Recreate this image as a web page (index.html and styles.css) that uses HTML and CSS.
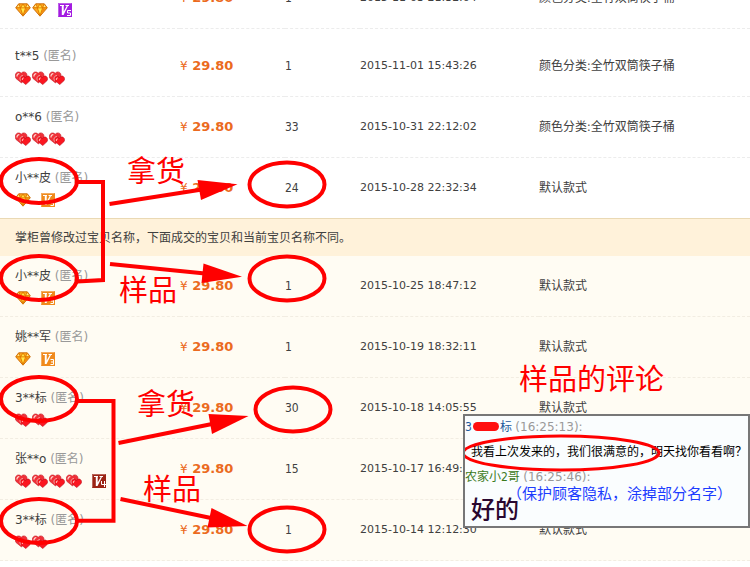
FILE: index.html
```html
<!doctype html>
<html lang="zh-CN">
<head>
    <meta charset="UTF-8">
    <meta name="viewport" content="width=device-width, initial-scale=1.0">
    <title>成交记录</title>
    <link rel="stylesheet" href="styles.css">
</head>
<body>
<!-- icons used in the buyer column -->
<svg class="sprite" aria-hidden="true">
    <symbol id="heart" viewBox="0 0 16 14">
        <path d="M6.500 12L1 7.500C-.3 5.500-.1 2.300 2.300 1.200 4 .6 5.300 1.200 6.200 2.300 7.200.8 9.200.5 10.600 1.400 12.200 2.600 12.300 4.600 11.500 6z" fill="#f03038" stroke="#c8202a" stroke-width=".6"/>
        <path d="M2 5.500C1.900 3.700 2.900 2.700 4.300 2.700" fill="none" stroke="#ffd8d0" stroke-width="1.200"/>
        <path d="M10.700 13.600L6 9.500C4.800 7.700 5.700 5.500 7.500 5.300 8.900 5.200 9.900 5.900 10.400 6.800 11.200 5.200 12.900 4.500 14.300 5.400 15.900 6.600 15.900 8.500 14.900 9.800z" fill="#fb1620" stroke="#b80d1c" stroke-width=".6"/>
        <path d="M5.600 9.600C4.300 7.200 5.300 4.700 8 4.600" fill="none" stroke="#ffc8c0" stroke-width=".8"/>
        <path d="M7.500 8.900C7 7.700 7.600 6.900 8.700 7" fill="none" stroke="#ffd8d0" stroke-width="1"/>
    </symbol>
    <symbol id="diamond" viewBox="0 0 16 14">
        <path d="M3.700.8h8.600L15.300 4.800 8 13.200.700 4.800z" fill="#ffa81c" stroke="#c86400" stroke-width=".9"/>
        <path d="M1 4.800h14M3.800 1l1.600 3.800L8 13l2.600-8.200L12.200 1M5.400 4.800L8 1l2.600 3.800" fill="none" stroke="#d87800" stroke-width=".8"/>
        <path d="M6.500 4.200L8 2.200l1.500 2zM6.200 5.500h3.600L8 10.500z" fill="#ffe94a"/>
        <path d="M2.300 4.100l1.300-2 .9 2zM11.500 4.100l.9-2 1.300 2z" fill="#ffe88c"/>
        <path d="M11.200 5.500h2.300L9.300 10.300z" fill="#f08408"/>
    </symbol>
    <symbol id="vee" viewBox="0 0 14 14">
        <rect width="14" height="14" fill="currentColor"/>
        <path d="M.5 13.500V.5h13" fill="none" stroke="#fff" stroke-opacity=".3"/>
        <path d="M2 2h4v1H5.700v5.500L8.700 3H7.500V2H11v1h-1L5.500 12H3.800V3H2z" fill="#fff"/>
    </symbol>
    <symbol id="n3" viewBox="0 0 5 6">
        <path d="M.5.5h3v5h-3M1 3h2.500" fill="none" stroke="#fff"/>
    </symbol>
    <symbol id="n4" viewBox="0 0 5 6">
        <path d="M3.500 6V0M.5 0v3.500H5" fill="none" stroke="#fff"/>
    </symbol>
    <symbol id="n5" viewBox="0 0 5 6">
        <path d="M4 .5H.5V3h3v2.500H0" fill="none" stroke="#fff"/>
    </symbol>
</svg>

<main class="page">
    <table class="records">
        <colgroup>
            <col class="col-buyer">
            <col class="col-price">
            <col class="col-count">
            <col class="col-date">
            <col>
        </colgroup>
        <tbody>
        <tr>
            <td class="buyer">
                <div class="name">l**8 <span>(匿名)</span></div>
                <div class="icons">
                    <svg class="rank"><use href="#diamond"/></svg>
                    <svg class="rank"><use href="#diamond"/></svg>
                    <svg class="vip purple"><use href="#vee"/><use href="#n5" x="9" y="7" width="5" height="6"/></svg>
                </div>
            </td>
            <td class="price"><span>¥</span> 29.80</td>
            <td>1</td>
            <td class="date">2015-11-03 21:32:04</td>
            <td>颜色分类:全竹双筒筷子桶</td>
        </tr>
        <tr class="spaced">
            <td class="buyer">
                <div class="name">t**5 <span>(匿名)</span></div>
                <div class="icons">
                    <svg class="rank"><use href="#heart"/></svg>
                    <svg class="rank"><use href="#heart"/></svg>
                    <svg class="rank"><use href="#heart"/></svg>
                </div>
            </td>
            <td class="price"><span>¥</span> 29.80</td>
            <td>1</td>
            <td class="date">2015-11-01 15:43:26</td>
            <td>颜色分类:全竹双筒筷子桶</td>
        </tr>
        <tr>
            <td class="buyer">
                <div class="name">o**6 <span>(匿名)</span></div>
                <div class="icons">
                    <svg class="rank"><use href="#heart"/></svg>
                    <svg class="rank"><use href="#heart"/></svg>
                    <svg class="rank"><use href="#heart"/></svg>
                </div>
            </td>
            <td class="price"><span>¥</span> 29.80</td>
            <td>33</td>
            <td class="date">2015-10-31 22:12:02</td>
            <td>颜色分类:全竹双筒筷子桶</td>
        </tr>
        <tr class="last">
            <td class="buyer">
                <div class="name">小**皮 <span>(匿名)</span></div>
                <div class="icons">
                    <svg class="rank"><use href="#diamond"/></svg>
                    <svg class="vip orange"><use href="#vee"/><use href="#n3" x="9" y="7" width="5" height="6"/></svg>
                </div>
            </td>
            <td class="price"><span>¥</span> 29.80</td>
            <td>24</td>
            <td class="date">2015-10-28 22:32:34</td>
            <td>默认款式</td>
        </tr>
        </tbody>
        <tbody class="old">
        <tr class="notice">
            <td colspan="5">掌柜曾修改过宝贝名称，下面成交的宝贝和当前宝贝名称不同。</td>
        </tr>
        <tr>
            <td class="buyer">
                <div class="name">小**皮 <span>(匿名)</span></div>
                <div class="icons">
                    <svg class="rank"><use href="#diamond"/></svg>
                    <svg class="vip orange"><use href="#vee"/><use href="#n3" x="9" y="7" width="5" height="6"/></svg>
                </div>
            </td>
            <td class="price"><span>¥</span> 29.80</td>
            <td>1</td>
            <td class="date">2015-10-25 18:47:12</td>
            <td>默认款式</td>
        </tr>
        <tr>
            <td class="buyer">
                <div class="name">姚**军 <span>(匿名)</span></div>
                <div class="icons">
                    <svg class="rank"><use href="#diamond"/></svg>
                    <svg class="vip orange"><use href="#vee"/><use href="#n3" x="9" y="7" width="5" height="6"/></svg>
                </div>
            </td>
            <td class="price"><span>¥</span> 29.80</td>
            <td>1</td>
            <td class="date">2015-10-19 18:32:11</td>
            <td>默认款式</td>
        </tr>
        <tr>
            <td class="buyer">
                <div class="name">3**标 <span>(匿名)</span></div>
                <div class="icons">
                    <svg class="rank"><use href="#heart"/></svg>
                    <svg class="rank"><use href="#heart"/></svg>
                </div>
            </td>
            <td class="price"><span>¥</span> 29.80</td>
            <td>30</td>
            <td class="date">2015-10-18 14:05:55</td>
            <td>默认款式</td>
        </tr>
        <tr>
            <td class="buyer">
                <div class="name">张**o <span>(匿名)</span></div>
                <div class="icons">
                    <svg class="rank"><use href="#heart"/></svg>
                    <svg class="rank"><use href="#heart"/></svg>
                    <svg class="rank"><use href="#heart"/></svg>
                    <svg class="rank"><use href="#heart"/></svg>
                    <svg class="vip brown"><use href="#vee"/><use href="#n4" x="9" y="7" width="5" height="6"/></svg>
                </div>
            </td>
            <td class="price"><span>¥</span> 29.80</td>
            <td>15</td>
            <td class="date">2015-10-17 16:49:20</td>
            <td>默认款式</td>
        </tr>
        <tr>
            <td class="buyer">
                <div class="name">3**标 <span>(匿名)</span></div>
                <div class="icons">
                    <svg class="rank"><use href="#heart"/></svg>
                    <svg class="rank"><use href="#heart"/></svg>
                </div>
            </td>
            <td class="price"><span>¥</span> 29.80</td>
            <td>1</td>
            <td class="date">2015-10-14 12:12:30</td>
            <td>默认款式</td>
        </tr>
        </tbody>
    </table>

    <!-- red marks over the list -->
    <svg class="marks" width="750" height="567" viewBox="0 0 750 567" aria-hidden="true">
        <g class="ring">
            <ellipse cx="39" cy="181" rx="38" ry="22"/>
            <ellipse cx="39" cy="278" rx="38" ry="22"/>
            <ellipse cx="39" cy="399" rx="38" ry="22"/>
            <ellipse cx="39" cy="521" rx="38" ry="22"/>
            <ellipse cx="287" cy="184.500" rx="37.500" ry="22"/>
            <ellipse cx="287" cy="278.500" rx="37.500" ry="22"/>
            <ellipse cx="293" cy="409.500" rx="37.500" ry="22"/>
            <ellipse cx="287" cy="529.500" rx="37.500" ry="22"/>
        </g>
        <g class="link">
            <path d="M77 182H103V280L77 281.500"/>
            <path d="M77 401H113.500V520.700H77"/>
            <path d="M109.500 204L202 189.500"/>
            <path d="M110 264L205 273.500"/>
            <path d="M118.500 443L212 424"/>
            <path d="M120.500 499L211 518"/>
        </g>
        <g class="head">
            <path d="M197.500 180L237.500 184.300 201 200z"/>
            <path d="M203.500 263.500L242 276.700 201.500 283z"/>
            <path d="M208.500 414L248.500 416 212 434z"/>
            <path d="M211.500 508L247.500 526 207.500 527.500z"/>
        </g>
    </svg>
    <span class="label get-one">拿货</span>
    <span class="label sample-one">样品</span>
    <span class="label get-two">拿货</span>
    <span class="label sample-two">样品</span>
    <span class="label review">样品的评论</span>

    <section class="chat">
        <p class="from buyer-name">3<i class="scribble"></i>标 <time>(16:25:13):</time></p>
        <p class="message">我看上次发来的，我们很满意的，明天找你看看啊？</p>
        <p class="from seller-name">农家小2哥 <time>(16:25:46):</time></p>
        <p class="privacy">（保护顾客隐私，涂掉部分名字）</p>
        <p class="reply">好的</p>
        <svg class="chat-ring" width="200" height="40" aria-hidden="true">
            <ellipse cx="96" cy="20" rx="98" ry="17"/>
        </svg>
    </section>
</main>
</body>
</html>
```
FILE: styles.css
```css
* {
    box-sizing: border-box;
}

body {
    margin: 0;
    background: #fff;
    color: #404040;
    font: 12px/20px "DejaVu Sans Condensed", "Noto Sans CJK SC", sans-serif;
}

p {
    margin: 0;
}

.sprite {
    position: absolute;
    width: 0;
    height: 0;
}

.page {
    position: relative;
    overflow: hidden;
    padding-bottom: 6px;
}

/* the list is scrolled, the first row is cut by the top edge */
.records {
    width: 100%;
    margin-top: -32px;
    table-layout: fixed;
    border-spacing: 0;
}

.col-buyer {
    width: 180px;
}

.col-price {
    width: 105px;
}

.col-count {
    width: 75px;
}

.col-date {
    width: 179px;
}

td {
    padding: 0;
    border-bottom: 1px dashed #ececec;
    white-space: nowrap;
}

.spaced td {
    padding-top: 7px;
}

.last td {
    border-bottom: 0;
}

.old {
    background: #fffcf3;
}

.old td {
    border-bottom-color: #f2ede2;
}

.notice td {
    height: 38px;
    padding-left: 15px;
    border-top: 1px solid #ead9b4;
    border-bottom: 0;
    background: #fff2da;
}

td.buyer {
    padding: 10px 0 11px 15px;
}

.spaced td.buyer {
    padding-top: 17px;
}

.name,
.date {
    font-family: "DejaVu Sans", "Noto Sans CJK SC", sans-serif;
}

.date {
    font-size: 11px;
}

.name span {
    color: #999;
}

.icons {
    display: flex;
    gap: 1px;
    height: 14px;
    margin-top: 5px;
}

.rank {
    width: 16px;
    height: 14px;
}

.vip {
    width: 14px;
    height: 14px;
    margin-left: 9px;
}

.purple {
    color: #a31ce0;
}

.orange {
    color: #f08a1c;
}

.brown {
    color: #9c2414;
}

.price {
    color: #eb6a20;
    font-family: "DejaVu Sans", sans-serif;
    font-size: 13px;
    font-weight: bold;
}

.price span {
    font-size: 12px;
    font-weight: normal;
}

.marks {
    position: absolute;
    top: 0;
    left: 0;
}

.ring,
.link {
    fill: none;
    stroke: #f00;
    stroke-width: 4;
}

.head {
    fill: #f00;
}

.label {
    position: absolute;
    color: #f00;
    font-family: "Noto Sans CJK SC", sans-serif;
    font-size: 29px;
    line-height: 30px;
}

.get-one {
    top: 154px;
    left: 127px;
}

.sample-one {
    top: 273px;
    left: 119px;
}

.get-two {
    top: 387px;
    left: 137px;
}

.sample-two {
    top: 472px;
    left: 143px;
}

.review {
    top: 362px;
    left: 519px;
}

.chat {
    position: absolute;
    top: 414px;
    right: 0;
    width: 287px;
    height: 114px;
    overflow: hidden;
    border: 2px solid #777;
    background: #fafdfe;
    white-space: nowrap;
}

.from {
    line-height: 22px;
}

.buyer-name {
    color: #1c5a9c;
}

.seller-name {
    color: #3c7a1c;
}

.from time {
    color: #999;
    font-family: "DejaVu Sans", sans-serif;
}

.scribble {
    display: inline-block;
    width: 26px;
    height: 9px;
    margin: 0 1px;
    border-radius: 5px;
    background: #ff1010;
}

.message {
    padding-left: 6px;
    color: #000;
    line-height: 28px;
}

.privacy {
    padding-left: 42px;
    color: #1c3cff;
    font-size: 15px;
    line-height: 12px;
}

.reply {
    padding-left: 6px;
    color: #2a0830;
    font-size: 24px;
    font-weight: 500;
    line-height: 20px;
}

.chat-ring {
    position: absolute;
    top: 17px;
    left: 0;
    fill: none;
    stroke: #f00;
    stroke-width: 3;
}
```
